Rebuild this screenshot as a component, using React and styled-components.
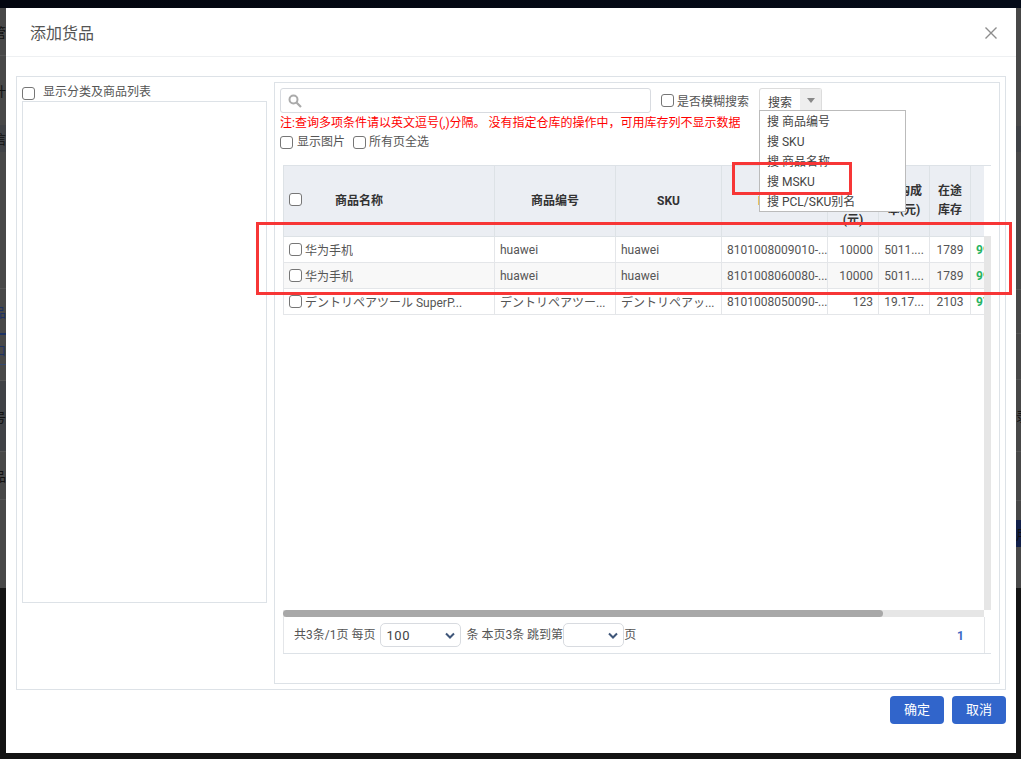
import React from 'react';
import styled, { createGlobalStyle } from 'styled-components';

const Global = createGlobalStyle`
  html, body { margin: 0; padding: 0; background: #141414; }
  * { box-sizing: border-box; }
  body { font-family: Roboto, "Noto Sans CJK SC", sans-serif; font-size: 12px; color: #555; }
`;

const Screen = styled.div`
  position: relative; width: 1021px; height: 759px; overflow: hidden;
  background: #141414; display: flex; flex-direction: column;
`;
const TopBar = styled.div`height: 8px; flex: none; background: linear-gradient(90deg, #03060f, #050b18);`;
const Stage = styled.div`display: flex; flex: none; height: 745px;`;
const PageEdge = styled.div`
  width: ${p => p.$w}px; height: 580px; flex: none; overflow: hidden; background: #484848;
  display: flex; flex-direction: column;
`;
const EdgeRow = styled.div`
  height: ${p => p.$h}px; flex: none; display: flex; align-items: center;
  justify-content: ${p => p.$start ? 'flex-start' : 'flex-end'};
  white-space: nowrap; font-size: 13px; color: ${p => p.$blue ? '#1d3263' : '#111'};
  background: ${p => p.$bg || 'transparent'};
  border-bottom: ${p => p.$line ? `1px solid ${p.$line}` : 'none'};
`;
const Modal = styled.div`
  width: 1010px; height: 745px; flex: none; background: #fff; display: flex; flex-direction: column;
`;
const Header = styled.div`
  height: 49px; flex: none; display: flex; align-items: center; justify-content: space-between;
  padding: 0 19px 1px 24px; border-bottom: 1px solid #eef0f2;
`;
const Title = styled.div`font-size: 16px; color: #555;`;
const CloseBtn = styled.div`width: 12px; height: 12px; margin-top: 2px; display: flex; color: #8d8d8d;`;
const Body = styled.div`padding: 19px 10px 0; flex: none;`;
const Outer = styled.div`
  height: 614px; border: 1px solid #dde2e7; padding: 5px; display: flex; gap: 6px;
`;
const LeftCol = styled.div`width: 246px; flex: none; display: flex; flex-direction: column;`;
const TreeToggle = styled.label`height: 19px; display: flex; align-items: flex-start; gap: 8px; padding-top: 5px; line-height: 10px; color: #555;`;
const TreeBox = styled.div`width: 245px; height: 502px; border: 1px solid #dde2e7;`;
const Check = styled.input.attrs({ type: 'checkbox' })`
  appearance: none; width: 13px; height: 13px; margin: 0; flex: none;
  border: 1px solid #767676; border-radius: 3px; background: #fff;
`;
const RightPanel = styled.div`
  width: 726px; height: 602px; flex: none; border: 1px solid #dde2e7; padding: 5px 0 0 5px;
  display: flex; flex-direction: column;
`;
const SearchRow = styled.div`display: flex; height: 25px; align-items: flex-start;`;
const SearchBox = styled.div`
  width: 371px; height: 25px; border: 1px solid #d8dbe0; border-radius: 3px;
  display: flex; align-items: center; padding-left: 7px; color: #aaa;
`;
const Fuzzy = styled.label`
  margin-left: 10px; width: 98px; display: flex; gap: 3px; align-items: center; height: 25px;
  white-space: nowrap; color: #555;
`;
const SplitBtn = styled.div`
  width: 63px; height: 23px; display: flex; border: 1px solid #dcdcdc; border-bottom: none; border-radius: 3px 3px 0 0;
`;
const SplitLabel = styled.div`width: 40px; display: flex; align-items: center; justify-content: center; padding-top: 3px; color: #444; font-size: 12px;`;
const SplitCaret = styled.div`flex: 1; background: #eee; display: flex; align-items: center; justify-content: center;`;
const Note = styled.div`height: 21px; line-height: 18px; margin-top: 1px; color: #f00; white-space: nowrap; font-size: 12px;`;
const Opts = styled.div`display: flex; height: 17px; align-items: flex-start; gap: 4px;`;
const Opt = styled.label`display: flex; align-items: center; gap: ${p => p.$gap}px; margin-right: 4px; line-height: 14px; white-space: nowrap; color: #555;`;
const TableArea = styled.div`
  margin: 13px 0 0 3px; width: 708px; display: flex; flex-direction: column; position: relative; height: 489px;
`;
const TopRule = styled.div`height: 1px; flex: none; background: #dde2e7;`;
const GridClip = styled.div`width: 701px; height: 444px; flex: none; overflow: hidden; background: #fff;`;
const Table = styled.div`width: 760px; display: grid; grid-template-columns: 212px 121px 106px 106px 51px 51px 41px 72px;`;
const Th = styled.div`
  height: 71px; background: #ebeef3; border-right: 1px solid #dde2e6; border-bottom: 1px solid #dde2e6;
  display: flex; align-items: center; justify-content: center; text-align: center;
  font-weight: 700; color: #333; font-size: 12px; line-height: 19px;
  &:first-child { border-left: 1px solid #dde2e6; }
`;
const ThName = styled.div`position: relative; width: 100%; display: flex; justify-content: center; padding-right: 60px;`;
const HeadCheck = styled(Check)`position: absolute; left: 5px; top: 1px;`;
const Td = styled.div`
  height: 26px; padding: 0 5px; border-right: 1px solid #e4e6e9; border-bottom: 1px solid #e4e6e9;
  background: ${p => p.$even ? '#f8f8f8' : '#fff'};
  display: flex; align-items: center; gap: 3px; overflow: hidden; white-space: nowrap;
  justify-content: ${p => p.$center ? 'center' : p.$right ? 'flex-end' : 'flex-start'};
  color: ${p => p.$green ? '#27b463' : '#555'}; font-weight: ${p => p.$green ? 700 : 400};
  &.first { border-left: 1px solid #e4e6e9; }
`;
const Ellip = styled.span`overflow: hidden; text-overflow: ellipsis; white-space: nowrap; min-width: 0;`;
const HScroll = styled.div`width: 701px; height: 7px; flex: none; background: #e6e6e6;`;
const HThumb = styled.div`width: 600px; height: 7px; background: #a8a8a8; border-radius: 4px;`;
const VScroll = styled.div`position: absolute; left: 701px; top: 71px; width: 7px; height: 374px; background: #e6e6e6;`;
const Footer = styled.div`
  width: 708px; height: 37px; flex: none; border-bottom: 1px solid #dde2e7; display: flex;
`;
const FootInner = styled.div`
  width: 702px; border-left: 1px solid #e4e6e9; border-right: 1px solid #e4e6e9; display: flex; align-items: center;
  padding: 0 20px 0 10px; white-space: nowrap; color: #555;
`;
const FootText = styled.span`padding-bottom: 4px;`;
const FootSelect = styled.div`
  width: ${p => p.$w}px; height: 24px; margin: 0 ${p => p.$mr}px 0 ${p => p.$ml}px; border: 1px solid #d8dbe0; border-radius: 5px;
  display: flex; align-items: center; justify-content: space-between; padding: 1px 5px 0; font-size: 13px; letter-spacing: .6px; color: #444; flex: none;
`;
const PageNo = styled.div`margin-left: auto; color: #3a68c4; font-weight: 700; font-size: 12px; padding-top: 1px;`;
const Menu = styled.div`
  position: absolute; left: 759px; top: 110px; width: 147px; height: 102px; background: #fff;
  border: 1px solid #bbb; padding: 1px 0 0 7px;
`;
const MenuItem = styled.div`height: 20px; line-height: 20px; color: #444; font-size: 12px; white-space: nowrap;`;
const Mark = styled.div`
  position: absolute; left: ${p => p.$x}px; top: ${p => p.$y}px; width: ${p => p.$w}px; height: ${p => p.$h}px;
  border: 3px solid #f73636; pointer-events: none;
`;
const Actions = styled.div`display: flex; justify-content: flex-end; gap: 8px; padding: 6px 10px 0 0;`;
const Btn = styled.button`
  width: 54px; height: 28px; border: 0; border-radius: 4px; background: #3165cb; color: #fff;
  font: inherit; font-size: 13px; padding: 0 0 3px;
`;
const Sliver = styled.span`color: #e8a13f;`;

const Chevron = () => (
  <svg width="10" height="7" viewBox="0 0 10 7"><path d="M1 1.5 5 5.5 9 1.5" fill="none" stroke="#3f5679" strokeWidth="2" /></svg>
);
const rows = [
  { name: '华为手机', code: 'huawei', sku: 'huawei', m: '8101008009010-...', a: '10000', b: '5011....', c: '1789', d: '999' },
  { name: '华为手机', code: 'huawei', sku: 'huawei', m: '8101008060080-...', a: '10000', b: '5011....', c: '1789', d: '999' },
  { name: 'デントリペアツール SuperP...', code: 'デントリペアツー...', sku: 'デントリペアッ...', m: '8101008050090-...', a: '123', b: '19.17...', c: '2103', d: '979' },
];

export default function App() {
  return (
    <Screen>
      <Global />
      <TopBar />
      <Stage>
        <PageEdge $w={6}>
          <EdgeRow $h={48} $line="#555">管</EdgeRow>
          <EdgeRow $h={69}>计</EdgeRow>
          <EdgeRow $h={27} $bg="#404246">信</EdgeRow>
          <EdgeRow $h={137} $line="#555" />
          <EdgeRow $h={44} $blue>品</EdgeRow>
          <EdgeRow $h={2} $bg="#1d3263" />
          <EdgeRow $h={30} $blue $line="#34486f">口</EdgeRow>
          <EdgeRow $h={16} $line="#555" />
          <EdgeRow $h={71} $bg="#404246" $line="#555">号</EdgeRow>
          <EdgeRow $h={48} $line="#555">品</EdgeRow>
          <EdgeRow $h={88} />
        </PageEdge>
        <Modal>
          <Header>
            <Title>添加货品</Title>
            <CloseBtn>
              <svg width="12" height="12" viewBox="0 0 12 12"><path d="M.5.5 11.500 11.500M11.500.5 .5 11.500" stroke="currentColor" strokeWidth="1.4" fill="none" /></svg>
            </CloseBtn>
          </Header>
          <Body>
            <Outer>
              <LeftCol>
                <TreeToggle><Check />显示分类及商品列表</TreeToggle>
                <TreeBox />
              </LeftCol>
              <RightPanel>
                <SearchRow>
                  <SearchBox>
                    <svg width="14" height="14" viewBox="0 0 14 14"><circle cx="5.500" cy="5.500" r="4" fill="none" stroke="#aaa" strokeWidth="2" /><path d="M8.500 8.500 13 13" stroke="#aaa" strokeWidth="2.200" /></svg>
                  </SearchBox>
                  <Fuzzy><Check />是否模糊搜索</Fuzzy>
                  <SplitBtn>
                    <SplitLabel>搜索</SplitLabel>
                    <SplitCaret><svg width="8" height="5" viewBox="0 0 8 5"><path d="M0 0h8L4 5z" fill="#888" /></svg></SplitCaret>
                  </SplitBtn>
                </SearchRow>
                <Note>注:查询多项条件请以英文逗号(,)分隔。 没有指定仓库的操作中，可用库存列不显示数据</Note>
                <Opts>
                  <Opt $gap={4}><Check />显示图片</Opt>
                  <Opt $gap={3}><Check />所有页全选</Opt>
                </Opts>
                <TableArea>
                  <TopRule />
                  <GridClip>
                    <Table>
                      <Th><ThName><HeadCheck />商品名称</ThName></Th>
                      <Th>商品编号</Th>
                      <Th>SKU</Th>
                      <Th><Sliver>MSKU</Sliver></Th>
                      <Th>采购<br />价格<br />(元)</Th>
                      <Th>采购成<br />本(元)</Th>
                      <Th>在途<br />库存</Th>
                      <Th>可用<br />库存</Th>
                      {rows.map((r, i) => {
                        const even = i === 1;
                        return (
                          <React.Fragment key={i}>
                            <Td className="first" $even={even}><Check /><Ellip>{r.name}</Ellip></Td>
                            <Td $even={even}><Ellip>{r.code}</Ellip></Td>
                            <Td $even={even}><Ellip>{r.sku}</Ellip></Td>
                            <Td $even={even}>{r.m}</Td>
                            <Td $even={even} $right>{r.a}</Td>
                            <Td $even={even} $center><Ellip>{r.b}</Ellip></Td>
                            <Td $even={even} $center>{r.c}</Td>
                            <Td $even={even} $green>{r.d}</Td>
                          </React.Fragment>
                        );
                      })}
                    </Table>
                  </GridClip>
                  <VScroll />
                  <HScroll><HThumb /></HScroll>
                  <Footer>
                    <FootInner>
                      <FootText>共3条/1页 每页</FootText>
                      <FootSelect $w={81} $ml={5} $mr={5}>100<Chevron /></FootSelect>
                      <FootText>条 本页3条 跳到第</FootText>
                      <FootSelect $w={61} $ml={0} $mr={0}><span /><Chevron /></FootSelect>
                      <FootText>页</FootText>
                      <PageNo>1</PageNo>
                    </FootInner>
                  </Footer>
                </TableArea>
              </RightPanel>
            </Outer>
          </Body>
          <Actions>
            <Btn>确定</Btn>
            <Btn>取消</Btn>
          </Actions>
        </Modal>
        <PageEdge $w={5}>
          <EdgeRow $h={118} $start />
          <EdgeRow $h={26} $start $bg="#404246" />
          <EdgeRow $h={138} $start $line="#555" />
          <EdgeRow $h={44} $start $line="#555" />
          <EdgeRow $h={46} $start $line="#555" />
          <EdgeRow $h={72} $start $line="#555">录</EdgeRow>
          <EdgeRow $h={49} $start $line="#555" />
          <EdgeRow $h={19} $start />
          <EdgeRow $h={27} $start $bg="#12204a">用</EdgeRow>
          <EdgeRow $h={41} $start />
        </PageEdge>
      </Stage>
      <Menu>
        <MenuItem>搜 商品编号</MenuItem>
        <MenuItem>搜 SKU</MenuItem>
        <MenuItem>搜 商品名称</MenuItem>
        <MenuItem>搜 MSKU</MenuItem>
        <MenuItem>搜 PCL/SKU别名</MenuItem>
      </Menu>
      <Mark $x={732} $y={162} $w={120} $h={33} />
      <Mark $x={256} $y={222} $w={756} $h={73} />
    </Screen>
  );
}
